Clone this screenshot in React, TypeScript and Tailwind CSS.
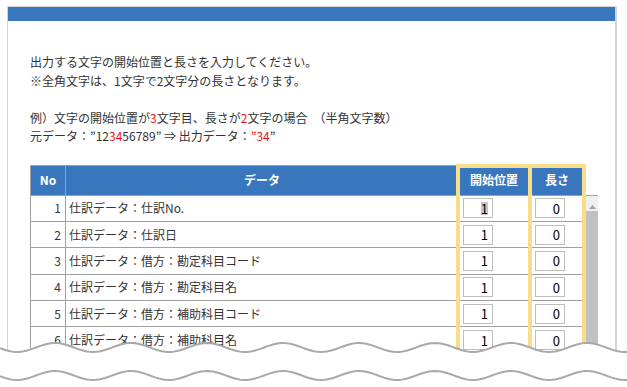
import React from 'react';

const rows = [
  { no: 1, label: '仕訳データ：仕訳No.', start: '1', len: '0', selected: true },
  { no: 2, label: '仕訳データ：仕訳日', start: '1', len: '0' },
  { no: 3, label: '仕訳データ：借方：勘定科目コード', start: '1', len: '0' },
  { no: 4, label: '仕訳データ：借方：勘定科目名', start: '1', len: '0' },
  { no: 5, label: '仕訳データ：借方：補助科目コード', start: '1', len: '0' },
  { no: 6, label: '仕訳データ：借方：補助科目名', start: '1', len: '0' },
];

// torn-paper edge at the bottom of the shot
function wave(offset: number) {
  const pts: string[] = [];
  for (let x = 0; x <= 627; x += 3) {
    const y = offset + 12.5 - 4.5 * Math.cos((2 * Math.PI * (x - 55)) / 76);
    pts.push(`${x},${y.toFixed(2)}`);
  }
  return pts;
}

function TornEdge() {
  const upper = wave(0);
  const lower = wave(28);
  return (
    <svg className="absolute left-0 top-[335px]" width="627" height="52" viewBox="0 0 627 52">
      <path d={`M${upper.join(' L')} L627,52 L0,52 Z`} fill="#fff" />
      <path d={`M${upper.join(' L')}`} fill="none" stroke="#a9a9a9" strokeWidth="2" />
      <path d={`M${lower.join(' L')}`} fill="none" stroke="#a9a9a9" strokeWidth="2" />
    </svg>
  );
}

function Box({ value, selected }: { value: string; selected?: boolean }) {
  return (
    <div className="ml-[5px] flex h-[20px] w-[30px] items-center justify-end border border-[#bdbdbd] bg-white pr-[4px] text-[13px] leading-none text-black">
      <span className={selected ? 'bg-[#c6c6c6]' : ''}>{value}</span>
    </div>
  );
}

export default function App() {
  return (
    <div
      className="relative h-[387px] w-[627px] overflow-hidden bg-white text-[#333]"
      style={{ fontFamily: '"Noto Sans CJK JP", "Noto Sans", sans-serif' }}
    >
      <div className="ml-[7px] mt-[6px] h-[400px] w-[610px] border-l border-r-2 border-t border-[#d4d4d4]">
        <div className="h-[14px] bg-[#3877bd]" />
        <div className="pl-[22px]">
          <div className="mt-[32px] text-[12px] leading-[18.5px]">
            <p>出力する文字の開始位置と長さを入力してください。</p>
            <p>※全角文字は、1文字で2文字分の長さとなります。</p>
            <p>&nbsp;</p>
            <p>
              例）文字の開始位置が<span className="text-[#ee1111]">3</span>文字目、長さが
              <span className="text-[#ee1111]">2</span>文字の場合　（半角文字数）
            </p>
            <p>
              元データ：”12<span className="text-[#ee1111]">34</span>56789” ⇒ 出力データ：
              <span className="text-[#ee1111]">”34</span>”
            </p>
          </div>

          <div className="relative mt-[19px] w-[568px]">
            <div className="flex h-[30px] text-[12px] font-bold text-white">
              <div className="flex w-[36px] items-center justify-center border-l border-r border-t border-[#a0a0a0] bg-[#3877bd]">No</div>
              <div className="flex w-[392px] items-center justify-center border-t border-[#a0a0a0] bg-[#3877bd]">データ</div>
              <div className="flex w-[72px] items-center justify-center border-t border-[#a0a0a0] bg-[#3877bd]">開始位置</div>
              <div className="flex w-[56px] items-center justify-center border-t border-[#a0a0a0] bg-[#3877bd] pr-[2px]">長さ</div>
              <div className="w-[12px] bg-white" />
            </div>

            <div className="flex border-t border-[#a0a0a0]">
              <div className="w-[556px]">
                {rows.map((r) => (
                  <div key={r.no} className="flex h-[26.4px] items-center border-b border-[#a0a0a0] text-[12px]">
                    <div className="flex h-full w-[36px] items-center justify-end border-l border-r border-[#a0a0a0] pr-[4px]">{r.no}</div>
                    <div className="w-[392px] pl-[3px]">{r.label}</div>
                    <div className="w-[72px]">
                      <Box value={r.start} selected={r.selected} />
                    </div>
                    <div className="w-[56px]">
                      <Box value={r.len} />
                    </div>
                  </div>
                ))}
              </div>
              <div className="flex w-[12px] flex-col bg-[#f0f0f0]">
                <div className="flex h-[13px] items-end justify-center">
                  <svg width="7" height="4" viewBox="0 0 7 4">
                    <path d="M0 4 L3.5 0 L7 4 Z" fill="#a3a3a3" />
                  </svg>
                </div>
                <div className="mt-[2px] flex-1 bg-[#c1c1c1]" />
              </div>
            </div>

            <div className="absolute left-[426px] top-[-1px] h-[196px] w-[76px] border-4 border-[#f8de8b]" />
            <div className="absolute left-[498px] top-[-1px] h-[196px] w-[58px] border-4 border-[#f8de8b]" />
          </div>
        </div>
      </div>
      <TornEdge />
    </div>
  );
}
